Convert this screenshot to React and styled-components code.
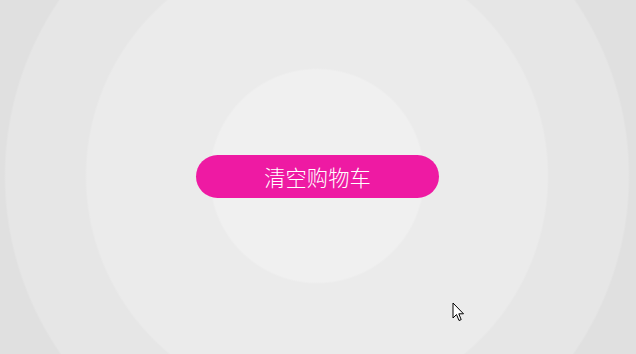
import React from 'react';
import styled, { createGlobalStyle } from 'styled-components';

const GlobalStyle = createGlobalStyle`
  html, body {
    margin: 0;
    padding: 0;
    background: #e0e0e0;
  }
  #root {
    height: 100vh;
  }
`;

const Stage = styled.div`
  position: relative;
  width: 100vw;
  height: 100vh;
  overflow: hidden;
  display: flex;
  align-items: center;
  justify-content: center;
  font-family: "Noto Sans CJK SC", "Noto Sans", sans-serif;
  background: radial-gradient(
    circle at 317px 176px,
    #f0f0f0 0,
    #f0f0f0 106px,
    #ebebeb 108px,
    #ebebeb 230px,
    #e6e6e6 232px,
    #e6e6e6 311px,
    #e0e0e0 313px
  );
`;

const ClearButton = styled.button`
  width: 243px;
  height: 43px;
  border: 0;
  border-radius: 22px;
  background: #ee1aa3;
  color: #fff;
  font-family: inherit;
  font-size: 21.3px;
  font-weight: 300;
  padding: 0 0 0 0;
  cursor: pointer;
  margin: -1px 1px 0 0;
`;

const Pointer = styled.svg`
  position: absolute;
  left: 452px;
  top: 302px;
`;

function App() {
  return (
    <>
      <GlobalStyle />
      <Stage>
        <ClearButton>清空购物车</ClearButton>
        <Pointer width="14" height="21" viewBox="0 0 14 21">
          <path
            d="M1 1 L1 16 L4.5 12.5 L7 18.5 L9.2 17.6 L6.8 11.8 L11.5 11.8 Z"
            fill="#fff"
            stroke="#000"
            strokeWidth="1"
            strokeLinejoin="round"
          />
        </Pointer>
      </Stage>
    </>
  );
}

export default App;
